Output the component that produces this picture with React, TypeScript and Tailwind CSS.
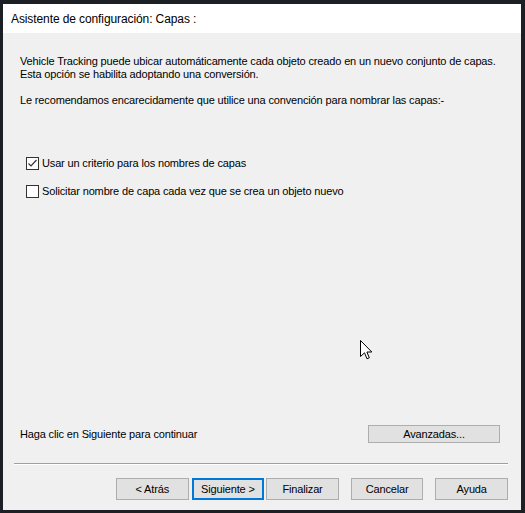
import React from "react";

function Btn({ label, primary, className = "" }: { label: string; primary?: boolean; className?: string }) {
  return (
    <div
      className={
        "h-[22px] w-[73px] flex items-center justify-center bg-[#e1e1e1] text-black " +
        (primary ? "border-2 border-[#0078d7]" : "border border-[#adadad]") +
        " " +
        className
      }
    >
      {label}
    </div>
  );
}

function Check({ checked, label, className = "" }: { checked?: boolean; label: string; className?: string }) {
  return (
    <div className={"flex items-center h-[13px] " + className}>
      <div className="w-[13px] h-[13px] border border-[#333333] bg-white flex items-center justify-center shrink-0">
        {checked && (
          <svg width="11" height="11" viewBox="0 0 11 11">
            <path d="M1.5 5.5 L4 8 L9.5 2" fill="none" stroke="#333333" strokeWidth="1.2" />
          </svg>
        )}
      </div>
      <span className="ml-[3px] leading-[13px]">{label}</span>
    </div>
  );
}

export default function App() {
  return (
    <div
      className="relative w-[525px] h-[513px] bg-[#1c1f24] pt-[4px] pl-[3px] overflow-hidden"
      style={{ fontFamily: '"Liberation Sans", Arial, sans-serif' }}
    >
      <div className="w-[518px] h-[506px] flex flex-col text-[11px] tracking-[-0.15px] text-black whitespace-nowrap">
        <div className="h-[29px] bg-white flex items-center pl-[8px] text-[12px] tracking-[-0.1px] shrink-0">
          Asistente de configuración: Capas :
        </div>
        <div className="flex-1 bg-[#f0f0f0] flex flex-col">
          <div className="mt-[22px] pl-[17px] leading-[13px]">
            <div>Vehicle Tracking puede ubicar automáticamente cada objeto creado en un nuevo conjunto de capas.</div>
            <div>Esta opción se habilita adoptando una conversión.</div>
          </div>
          <div className="mt-[13px] pl-[17px] leading-[13px]">
            Le recomendamos encarecidamente que utilice una convención para nombrar las capas:-
          </div>
          <Check checked label="Usar un criterio para los nombres de capas" className="mt-[50px] ml-[23px]" />
          <Check label="Solicitar nombre de capa cada vez que se crea un objeto nuevo" className="mt-[15px] ml-[23px]" />
          <div className="flex-1" />
          <div className="flex items-center h-[18px] pl-[17px] pr-[21px]">
            <span className="flex-1">Haga clic en Siguiente para continuar</span>
            <div className="w-[132px] h-[18px] flex items-center justify-center bg-[#e1e1e1] border border-[#adadad]">
              Avanzadas...
            </div>
          </div>
          <div className="mt-[20px] ml-[11px] mr-[13px] border-t border-[#a0a0a0] border-b border-b-white" />
          <div className="mt-[13px] mb-[10px] flex pr-[13px] pl-[113px]">
            <Btn label="< Atrás" />
            <Btn label="Siguiente >" primary className="ml-[3px]" />
            <Btn label="Finalizar" className="ml-[2px]" />
            <Btn label="Cancelar" className="ml-[12px]" />
            <Btn label="Ayuda" className="ml-[12px]" />
          </div>
        </div>
      </div>
      <svg className="absolute left-[360px] top-[340px]" width="13" height="20" viewBox="0 0 13 20">
        <path
          d="M0.5 0.5 L0.5 16.5 L4.5 12.8 L7 18.8 L9.3 17.8 L6.9 12 L11.8 12 Z"
          fill="white"
          stroke="black"
          strokeWidth="1"
          strokeLinejoin="miter"
        />
      </svg>
    </div>
  );
}
